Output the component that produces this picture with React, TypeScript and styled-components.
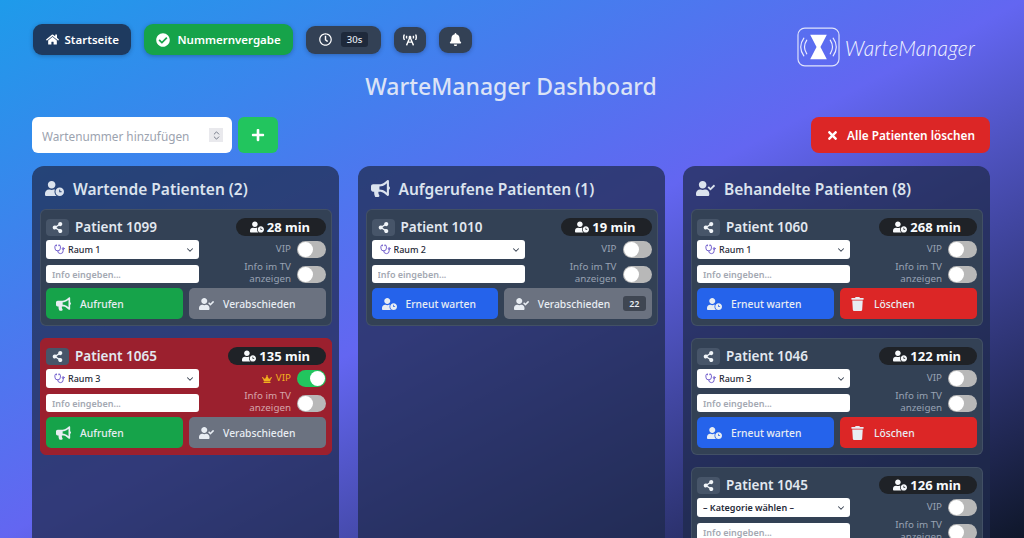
import { FC, ReactNode } from "react";
import styled, { createGlobalStyle } from "styled-components";
import {
  FaBell,
  FaBroadcastTower,
  FaBullhorn,
  FaCheckCircle,
  FaCrown,
  FaHome,
  FaPlus,
  FaRegClock,
  FaShareAlt,
  FaTimes,
  FaTrash,
  FaUserCheck,
  FaUserClock,
} from "react-icons/fa";
import { ChevronDown, ChevronsUpDown, Stethoscope } from "lucide-react";

const GlobalStyle = createGlobalStyle`
  html, body {
    margin: 0;
    height: 538px;
    overflow: hidden;
  }
  * {
    box-sizing: border-box;
  }
`;

const Page = styled.div`
  height: 538px;
  overflow: hidden;
  padding: 24px 34px 0 32px;
  font-family: "Noto Sans", "Open Sans", sans-serif;
  background: linear-gradient(to bottom right, #1e9bea 0%, #6366f1 50%, #0f172a 100%);
`;

const TopBar = styled.div`
  display: flex;
  align-items: flex-start;
  justify-content: space-between;
  height: 43px;
`;

const NavGroup = styled.div`
  display: flex;
  align-items: center;
  gap: 13px;
  height: 31px;
  margin-left: 1px;
`;

const NavButton = styled.button<{ $bg: string; $h?: number; $pad?: number; $gap?: number }>`
  display: flex;
  align-items: center;
  gap: ${(p) => p.$gap ?? 7}px;
  height: ${(p) => p.$h ?? 31}px;
  padding: 0 ${(p) => p.$pad ?? 13}px;
  border: 0;
  border-radius: 9px;
  background: ${(p) => p.$bg};
  color: #fff;
  font: 600 11.5px "Noto Sans", sans-serif;
  box-shadow: 0 1px 4px rgba(15, 23, 42, 0.3);
`;

const TimerValue = styled.span`
  padding: 2px 6px;
  border-radius: 3px;
  background: #1e293b;
  color: #e2e8f0;
  font-size: 9.5px;
  font-weight: 500;
  line-height: 11px;
`;

const Logo = styled.div`
  display: flex;
  align-items: center;
  gap: 5px;
  height: 40px;
  margin: 3px 15px 0 0;
`;

const LogoText = styled.span`
  color: #f1f3ff;
  font: italic 300 21px Lato, "Open Sans", sans-serif;
  letter-spacing: 0.2px;
`;

const Title = styled.h1`
  margin: 3px 0 0;
  color: #dbe3f6;
  font-size: 23px;
  font-weight: 500;
  line-height: 32px;
  text-align: center;
`;

const FormRow = styled.div`
  display: flex;
  gap: 6px;
  height: 36px;
  margin-top: 15px;
`;

const NumberWrap = styled.div`
  position: relative;
  width: 200px;
  height: 36px;
`;

const NumberInput = styled.input`
  display: block;
  width: 100%;
  height: 36px;
  padding: 1px 10px 0;
  border: 0;
  border-radius: 6px;
  background: #fff;
  font: 11.8px "Noto Sans", sans-serif;
  appearance: textfield;
  &::placeholder {
    color: #9ca3af;
  }
`;

const Spinner = styled.span`
  position: absolute;
  top: 11px;
  right: 9px;
  display: flex;
  align-items: center;
  justify-content: center;
  width: 14px;
  height: 14px;
  background: #e9e9ed;
  color: #6b7280;
`;

const AddButton = styled.button`
  display: flex;
  align-items: center;
  justify-content: center;
  width: 40px;
  border: 0;
  border-radius: 6px;
  background: #22c55e;
  color: #fff;
  font-size: 14px;
`;

const ClearButton = styled.button`
  display: flex;
  align-items: center;
  gap: 8px;
  margin-left: auto;
  padding: 0 15px;
  border: 0;
  border-radius: 8px;
  background: #dc2626;
  color: #fff;
  font: 600 11.8px "Noto Sans", sans-serif;
`;

const Columns = styled.div`
  display: grid;
  grid-template-columns: repeat(3, 307px);
  gap: 18.5px;
  margin-top: 13px;
`;

const Panel = styled.section`
  height: 520px;
  padding: 12px 7px 0 8px;
  border-radius: 12px;
  background: rgba(30, 41, 75, 0.72);
`;

const PanelHeading = styled.h2`
  display: flex;
  align-items: center;
  gap: 9px;
  height: 21px;
  margin: 0 0 10px 5px;
  color: #dbe3ee;
  font-size: 15.5px;
  font-weight: 600;
  svg {
    font-size: 19px;
  }
`;

const CardList = styled.div`
  display: flex;
  flex-direction: column;
  gap: 12px;
`;

const CardBox = styled.article<{ $vip?: boolean }>`
  padding: 7px 5px 6px;
  border: 1px solid ${(p) => (p.$vip ? "#9f1f2e" : "rgba(148, 163, 184, 0.16)")};
  border-radius: 6px;
  background: ${(p) => (p.$vip ? "#9b202e" : "#334155")};
`;

const CardHead = styled.div`
  display: flex;
  align-items: center;
  justify-content: space-between;
  height: 20px;
  margin-bottom: 3px;
`;

const NameGroup = styled.div`
  display: flex;
  align-items: center;
  gap: 6px;
`;

const ShareButton = styled.span`
  display: flex;
  align-items: center;
  justify-content: center;
  width: 23px;
  height: 17px;
  border-radius: 4px;
  background: #475569;
  color: #f1f5f9;
  font-size: 11px;
`;

const PatientName = styled.span`
  color: #e2e8f0;
  font-size: 13.5px;
  font-weight: 600;
`;

const Waiting = styled.span`
  display: flex;
  align-items: center;
  gap: 3px;
  height: 18px;
  padding: 0 16px 0 14px;
  border-radius: 9px;
  background: #1f2227;
  color: #f8fafc;
  font-size: 13px;
  font-weight: 700;
  svg {
    width: 14px;
    height: 12px;
  }
`;

const Fields = styled.div`
  display: grid;
  grid-template-columns: 153px 1fr;
  grid-template-rows: 19px 18px;
  gap: 6px 0;
`;

const SelectWrap = styled.div`
  position: relative;
  height: 19px;
`;

const RoomSelect = styled.select<{ $icon: boolean }>`
  display: block;
  width: 100%;
  height: 19px;
  padding: 0 0 0 ${(p) => (p.$icon ? 22 : 6)}px;
  border: 0;
  border-radius: 3px;
  background: #fff;
  color: #1f2937;
  font: ${(p) => (p.$icon ? 500 : 600)} 9px "Noto Sans", sans-serif;
  appearance: none;
`;

const RoomIcon = styled(Stethoscope)`
  position: absolute;
  left: 8px;
  top: 4px;
  pointer-events: none;
`;

const SelectArrow = styled(ChevronDown)`
  position: absolute;
  right: 4px;
  top: 5px;
  pointer-events: none;
`;

const InfoInput = styled.input`
  display: block;
  width: 100%;
  height: 18px;
  padding: 0 6px;
  border: 0;
  border-radius: 3px;
  background: #fff;
  font: 600 9px "Noto Sans", sans-serif;
  &::placeholder {
    color: #a3a8b2;
  }
`;

const ToggleRow = styled.div`
  display: flex;
  align-items: center;
  justify-content: flex-end;
  gap: 6px;
`;

const ToggleLabel = styled.span<{ $gold?: boolean; $vip?: boolean }>`
  display: flex;
  align-items: center;
  gap: 4px;
  color: ${(p) => (p.$gold ? "#f2b01e" : p.$vip ? "#d6a5ab" : "#98a2b3")};
  font-size: 9.8px;
  line-height: 12.5px;
  text-align: right;
  svg {
    font-size: 10px;
  }
`;

const InfoLabel = styled(ToggleLabel)`
  margin-bottom: 2px;
`;

const Track = styled.span<{ $on?: boolean }>`
  display: flex;
  align-items: center;
  justify-content: ${(p) => (p.$on ? "flex-end" : "flex-start")};
  flex: none;
  width: 29px;
  height: 17px;
  padding: 0 1px;
  border-radius: 9px;
  background: ${(p) => (p.$on ? "#22c55e" : "#b8b8b8")};
  &::after {
    content: "";
    width: 15px;
    height: 15px;
    border-radius: 50%;
    background: #fff;
  }
`;

const Actions = styled.div`
  display: flex;
  gap: 6px;
  margin-top: 5px;
`;

const ActionButton = styled.button<{ $bg: string }>`
  display: flex;
  flex: 1 1 0;
  align-items: center;
  gap: 9px;
  height: 31px;
  padding: 0 6px 0 10px;
  border: 0;
  border-radius: 5px;
  background: ${(p) => p.$bg};
  color: #e8edf3;
  font: 500 10.3px "Noto Sans", sans-serif;
  white-space: nowrap;
  svg {
    flex: none;
    width: 15px;
    height: 14px;
  }
`;

const CountBadge = styled.span`
  margin-left: 4px;
  padding: 1px 6px;
  border-radius: 3px;
  background: #3f4652;
  font-size: 9px;
  font-weight: 600;
`;

const green = "#16a34a";
const gray = "#6b7280";
const blue = "#2563eb";
const red = "#dc2626";

type ActionKind = "waiting" | "called" | "done";

const renderActions = (kind: ActionKind) => {
  if (kind === "waiting") {
    return (
      <>
        <ActionButton $bg={green}><FaBullhorn />Aufrufen</ActionButton>
        <ActionButton $bg={gray}><FaUserCheck />Verabschieden</ActionButton>
      </>
    );
  }
  if (kind === "called") {
    return (
      <>
        <ActionButton $bg={blue}><FaUserClock />Erneut warten</ActionButton>
        <ActionButton $bg={gray}><FaUserCheck />Verabschieden<CountBadge>22</CountBadge></ActionButton>
      </>
    );
  }
  return (
    <>
      <ActionButton $bg={blue}><FaUserClock />Erneut warten</ActionButton>
      <ActionButton $bg={red}><FaTrash />Löschen</ActionButton>
    </>
  );
};

const PatientCard: FC<{ id: number; minutes: number; room?: string; kind: ActionKind; vip?: boolean }> = ({
  id,
  minutes,
  room,
  kind,
  vip,
}) => {
  return (
    <CardBox $vip={vip}>
      <CardHead>
        <NameGroup>
          <ShareButton><FaShareAlt /></ShareButton>
          <PatientName>Patient {id}</PatientName>
        </NameGroup>
        <Waiting><FaUserClock />{minutes} min</Waiting>
      </CardHead>
      <Fields>
        <SelectWrap>
          <RoomSelect $icon={!!room} defaultValue={room ?? "– Kategorie wählen –"}>
            <option>{room ?? "– Kategorie wählen –"}</option>
          </RoomSelect>
          {room && <RoomIcon size={11} color="#6a55c9" />}
          <SelectArrow size={10} color="#374151" strokeWidth={2.5} />
        </SelectWrap>
        <ToggleRow>
          <ToggleLabel $gold={vip}>{vip && <FaCrown />}VIP</ToggleLabel>
          <Track $on={vip} />
        </ToggleRow>
        <InfoInput placeholder="Info eingeben..." />
        <ToggleRow>
          <InfoLabel $vip={vip}>Info im TV<br />anzeigen</InfoLabel>
          <Track />
        </ToggleRow>
      </Fields>
      <Actions>{renderActions(kind)}</Actions>
    </CardBox>
  );
};

const PatientPanel: FC<{ icon: ReactNode; title: string; children: ReactNode }> = ({ icon, title, children }) => {
  return (
    <Panel>
      <PanelHeading>{icon}{title}</PanelHeading>
      <CardList>{children}</CardList>
    </Panel>
  );
};

const LogoMark = () => (
  <svg width="43" height="40" viewBox="0 0 44 40" fill="none">
    <rect x="1" y="0.7" width="42" height="38.6" rx="7" stroke="#dfe3fb" strokeWidth="1.2" />
    <path d="M13.5 7.5h17l-6.500 12.500 6.500 12.500h-17l6.500-12.500z" fill="#fff" />
    <path d="M10 13c-2.800 4.200-2.800 9.800 0 14M34 13c2.800 4.200 2.800 9.800 0 14" stroke="#e8eaff" strokeWidth="1.2" strokeLinecap="round" />
    <path d="M7 11c-4 5.600-4 12.400 0 18M37 11c4 5.600 4 12.400 0 18" stroke="#e8eaff" strokeWidth="1.2" strokeLinecap="round" />
  </svg>
);

export default function App() {
  return (
    <Page>
      <GlobalStyle />
      <TopBar>
        <NavGroup>
          <NavButton $bg="#1e3a5f" $pad={12.5} $gap={6}><FaHome size={13} />Startseite</NavButton>
          <NavButton $bg={green} $pad={12}><FaCheckCircle size={14} />Nummernvergabe</NavButton>
          <NavButton $bg="#334155" $h={28} $gap={9}><FaRegClock size={13} /><TimerValue>30s</TimerValue></NavButton>
          <NavButton $bg="#334155" $h={26} $pad={9}><FaBroadcastTower size={14} /></NavButton>
          <NavButton $bg="#334155" $h={26} $pad={10}><FaBell size={13} /></NavButton>
        </NavGroup>
        <Logo>
          <LogoMark />
          <LogoText>WarteManager</LogoText>
        </Logo>
      </TopBar>
      <Title>WarteManager Dashboard</Title>
      <FormRow>
        <NumberWrap>
          <NumberInput type="number" placeholder="Wartenummer hinzufügen" />
          <Spinner><ChevronsUpDown size={11} /></Spinner>
        </NumberWrap>
        <AddButton><FaPlus /></AddButton>
        <ClearButton><FaTimes size={13} />Alle Patienten löschen</ClearButton>
      </FormRow>
      <Columns>
        <PatientPanel icon={<FaUserClock />} title="Wartende Patienten (2)">
          <PatientCard id={1099} minutes={28} room="Raum 1" kind="waiting" />
          <PatientCard id={1065} minutes={135} room="Raum 3" kind="waiting" vip />
        </PatientPanel>
        <PatientPanel icon={<FaBullhorn />} title="Aufgerufene Patienten (1)">
          <PatientCard id={1010} minutes={19} room="Raum 2" kind="called" />
        </PatientPanel>
        <PatientPanel icon={<FaUserCheck />} title="Behandelte Patienten (8)">
          <PatientCard id={1060} minutes={268} room="Raum 1" kind="done" />
          <PatientCard id={1046} minutes={122} room="Raum 3" kind="done" />
          <PatientCard id={1045} minutes={126} kind="done" />
        </PatientPanel>
      </Columns>
    </Page>
  );
}
